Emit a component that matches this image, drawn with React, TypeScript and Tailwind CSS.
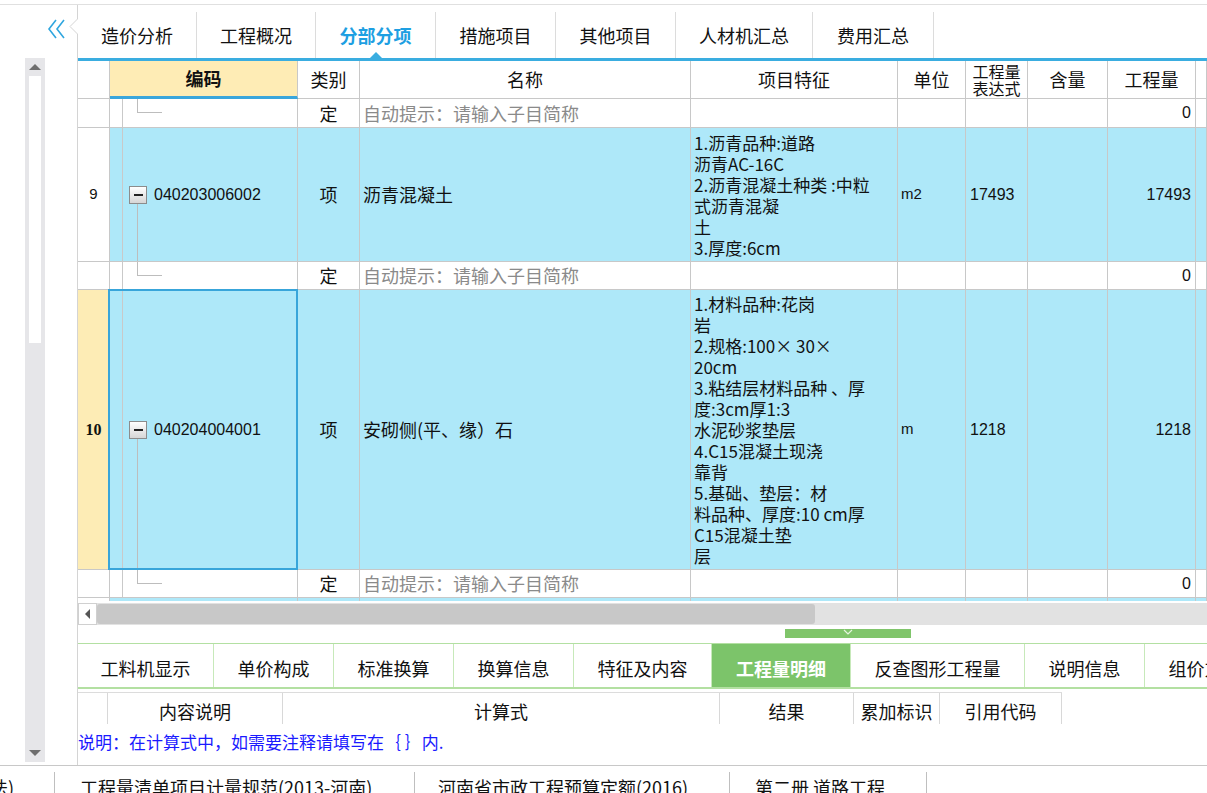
import React from 'react';

const GRID = 'grid grid-cols-[32px_188px_62px_331px_207px_68px_62px_80px_88px_11px]';
const LINE = 'border-r border-[#c8c8c8]';
const BLUE = 'bg-[#aee8f9]';

const topTabs = [
  { label: '造价分析', w: 'w-[119px]' },
  { label: '工程概况', w: 'w-[119px]' },
  { label: '分部分项', w: 'w-[120px]', active: true },
  { label: '措施项目', w: 'w-[120px]' },
  { label: '其他项目', w: 'w-[120px]' },
  { label: '人材机汇总', w: 'w-[137px]' },
  { label: '费用汇总', w: 'w-[121px]' },
];

const bottomTabs = [
  { label: '工料机显示', w: 'w-[136px]' },
  { label: '单价构成', w: 'w-[120px]' },
  { label: '标准换算', w: 'w-[120px]' },
  { label: '换算信息', w: 'w-[120px]' },
  { label: '特征及内容', w: 'w-[138px]' },
  { label: '工程量明细', w: 'w-[139px]', active: true },
  { label: '反查图形工程量', w: 'w-[174px]' },
  { label: '说明信息', w: 'w-[120px]' },
  { label: '组价方案', w: 'w-[120px]' },
];

const feat9 = ['1.沥青品种:道路', '沥青AC-16C', '2.沥青混凝土种类 :中粒', '式沥青混凝', '土', '3.厚度:6cm'];
const feat10 = [
  '1.材料品种:花岗',
  '岩',
  '2.规格:100× 30×',
  '20cm',
  '3.粘结层材料品种 、厚',
  '度:3cm厚1:3',
  '水泥砂浆垫层',
  '4.C15混凝土现浇',
  '靠背',
  '5.基础、垫层：材',
  '料品种、厚度:10 cm厚',
  'C15混凝土垫',
  '层',
];

const ExpandBox = () => (
  <span className="absolute left-[19px] top-1/2 -translate-y-1/2 w-[18px] h-[18px] border border-[#8c8c8c] bg-linear-to-b from-white to-[#d6d6d6] flex items-center justify-center">
    <span className="w-[9px] h-[2px] bg-[#222]" />
  </span>
);

const CodeCell: React.FC<{ code?: string; selected?: boolean; bg?: string }> = ({ code, selected, bg = '' }) => (
  <div className={`relative ${LINE} ${bg} flex items-center`}>
    <span className="absolute left-[12px] top-0 bottom-0 w-px bg-[#c9c9c9]" />
    {code ? (
      <>
        <ExpandBox />
        <span className="absolute left-[27px] top-[calc(50%+9px)] bottom-0 w-px bg-[#bdbdbd]" />
        <span className="pl-[44px] font-['Liberation_Sans',sans-serif] text-[16px] text-[#111]">{code}</span>
      </>
    ) : (
      <>
        <span className="absolute left-[27px] top-0 h-[13px] w-px bg-[#bdbdbd]" />
        <span className="absolute left-[27px] top-[13px] w-[25px] h-px bg-[#bdbdbd]" />
      </>
    )}
    {selected && <span className="absolute left-[-2px] top-[-1px] right-[-1px] bottom-[-1px] border-2 border-[#38a5da] z-10" />}
  </div>
);

const ChildRow: React.FC<{ h: string }> = ({ h }) => (
  <div className={`${GRID} ${h} border-b border-[#c8c8c8] bg-white`}>
    <div className={LINE} />
    <CodeCell />
    <div className={`${LINE} flex items-center justify-center`}>定</div>
    <div className={`${LINE} flex items-center pl-[3px] text-[#8a8a8a] whitespace-nowrap`}>自动提示：请输入子目简称</div>
    <div className={LINE} />
    <div className={LINE} />
    <div className={LINE} />
    <div className={LINE} />
    <div className={`${LINE} flex items-center justify-end pr-[4px] font-['Liberation_Sans',sans-serif] text-[16px]`}>0</div>
    <div className={LINE} />
  </div>
);

const ParentRow: React.FC<{
  h: string;
  no: string;
  code: string;
  name: string;
  feats: string[];
  unit: string;
  qty: string;
  selected?: boolean;
}> = ({ h, no, code, name, feats, unit, qty, selected }) => (
  <div className={`${GRID} ${h} border-b border-[#c8c8c8]`}>
    {selected ? (
      <div className={`${LINE} bg-[#fdecb5] flex items-center justify-center font-['Liberation_Serif',serif] font-bold text-[16px]`}>{no}</div>
    ) : (
      <div className={`${LINE} bg-white flex items-center justify-center font-['Liberation_Sans',sans-serif] text-[15px]`}>{no}</div>
    )}
    <CodeCell code={code} selected={selected} bg={BLUE} />
    <div className={`${LINE} ${BLUE} flex items-center justify-center`}>项</div>
    <div className={`${LINE} ${BLUE} flex items-center pl-[3px] whitespace-nowrap`}>{name}</div>
    <div className={`${LINE} ${BLUE} flex items-center pl-[3px] overflow-hidden`}>
      <div className="flex flex-col text-[17px] leading-[21px] whitespace-nowrap">
        {feats.map((l, i) => (
          <div key={i} className="h-[21px]">{l}</div>
        ))}
      </div>
    </div>
    <div className={`${LINE} ${BLUE} flex items-center pl-[3px] font-['Liberation_Sans',sans-serif] text-[15px]`}>{unit}</div>
    <div className={`${LINE} ${BLUE} flex items-center pl-[4px] font-['Liberation_Sans',sans-serif] text-[16px]`}>{qty}</div>
    <div className={`${LINE} ${BLUE}`} />
    <div className={`${LINE} ${BLUE} flex items-center justify-end pr-[4px] font-['Liberation_Sans',sans-serif] text-[16px]`}>{qty}</div>
    <div className={`${LINE} ${BLUE}`} />
  </div>
);

const HeaderCell: React.FC<{ children?: React.ReactNode }> = ({ children }) => (
  <div className={`${LINE} border-b flex items-center justify-center`}>{children}</div>
);

export default function App() {
  return (
    <div className="w-[1207px] h-[793px] overflow-hidden bg-white flex flex-col font-['Noto_Sans_CJK_SC',sans-serif] text-[18px] text-[#111]">
      <div className="h-[5px] border-b border-[#e0e0e0] shrink-0" />

      <div className="flex h-[760px] shrink-0">
        {/* Left collapsed panel */}
        <div className="relative w-[78px] shrink-0 border-r border-[#d4d4d4] flex flex-col">
          <div className="pl-[47px] pt-[13px] h-[35px]">
            <svg width="19" height="22" viewBox="0 0 19 22" fill="none" stroke="#2fa6df" strokeWidth="1.6">
              <polyline points="9,2 2,11 9,20" />
              <polyline points="17,2 10,11 17,20" />
            </svg>
          </div>
          <svg className="absolute right-[-1px] top-[14px]" width="9" height="15" viewBox="0 0 9 15">
            <rect x="8" y="0" width="1" height="15" fill="white" />
            <polyline points="8.5,0 1,7.5 8.5,15" fill="white" stroke="#d4d4d4" strokeWidth="1" />
          </svg>
          <div className="mt-[18px] mb-[3px] ml-[25px] w-[20px] flex-1 bg-[#e6e6e9] flex flex-col">
            <div className="h-[18px] flex items-center justify-center">
              <span className="w-0 h-0 border-x-[6px] border-x-transparent border-b-[6px] border-b-[#6e6e6e]" />
            </div>
            <div className="mx-[4px] h-[267px] bg-white" />
            <div className="flex-1" />
            <div className="h-[18px] flex items-center justify-center">
              <span className="w-0 h-0 border-x-[6px] border-x-transparent border-t-[6px] border-t-[#6e6e6e]" />
            </div>
          </div>
        </div>

        {/* Main area */}
        <div className="flex-1 flex flex-col min-w-0">
          {/* Top tabs */}
          <div className="flex items-end h-[56px] shrink-0 border-b-[3px] border-[#3aade0]">
            {topTabs.map((t) => (
              <div
                key={t.label}
                className={`relative ${t.w} h-[46px] border-r border-[#dcdcdc] flex items-center justify-center ${
                  t.active ? 'text-[#1e9fe2] font-bold' : ''
                }`}
              >
                {t.label}
                {t.active && (
                  <span className="absolute bottom-0 left-1/2 -translate-x-1/2 w-0 h-0 border-x-[6px] border-x-transparent border-b-[6px] border-b-[#3aade0]" />
                )}
              </div>
            ))}
          </div>

          {/* Table */}
          <div className="h-[540px] shrink-0 overflow-hidden">
            <div className={`${GRID} h-[38px]`}>
              <HeaderCell />
              <div className={`${LINE} bg-[#feecb5] border-b-[3px] border-b-[#3aa6dc] flex items-center justify-center font-bold`}>编码</div>
              <HeaderCell>类别</HeaderCell>
              <HeaderCell>名称</HeaderCell>
              <HeaderCell>项目特征</HeaderCell>
              <HeaderCell>单位</HeaderCell>
              <div className={`${LINE} border-b flex flex-col items-center justify-center text-[16px] leading-[17px]`}>
                <span className="h-[17px]">工程量</span>
                <span className="h-[17px]">表达式</span>
              </div>
              <HeaderCell>含量</HeaderCell>
              <HeaderCell>工程量</HeaderCell>
              <HeaderCell />
            </div>
            <ChildRow h="h-[29px]" />
            <ParentRow h="h-[134px]" no="9" code="040203006002" name="沥青混凝土" feats={feat9} unit="m2" qty="17493" />
            <ChildRow h="h-[28px]" />
            <ParentRow h="h-[280px]" no="10" code="040204004001" name="安砌侧(平、缘）石" feats={feat10} unit="m" qty="1218" selected />
            <ChildRow h="h-[28px]" />
            <div className={`${GRID} h-[3px]`}>
              <div className={`${LINE} bg-white`} />
              <div className={`${LINE} ${BLUE}`} />
              <div className={`${LINE} ${BLUE}`} />
              <div className={`${LINE} ${BLUE}`} />
              <div className={`${LINE} ${BLUE}`} />
              <div className={`${LINE} ${BLUE}`} />
              <div className={`${LINE} ${BLUE}`} />
              <div className={`${LINE} ${BLUE}`} />
              <div className={`${LINE} ${BLUE}`} />
              <div className={`${LINE} ${BLUE}`} />
            </div>
          </div>

          {/* Horizontal scrollbar */}
          <div className="mt-[2px] h-[22px] shrink-0 flex">
            <div className="w-[19px] bg-white border border-[#d0d0d0] flex items-center justify-center">
              <span className="w-0 h-0 border-y-[5px] border-y-transparent border-r-[5px] border-r-[#555]" />
            </div>
            <div className="flex-1 bg-[#e2e2e2] py-[1px]">
              <div className="w-[718px] h-full bg-[#c8c8c8] rounded-[3px]" />
            </div>
          </div>

          {/* Splitter handle */}
          <div className="h-[18px] shrink-0 pt-[4px]">
            <div className="ml-[707px] w-[126px] h-[9px] bg-[#80c56b] flex justify-center">
              <svg width="10" height="6" viewBox="0 0 10 6" fill="none" stroke="#e6f5df" strokeWidth="1.2">
                <polyline points="1,1 5,5 9,1" />
              </svg>
            </div>
          </div>

          {/* Bottom tabs */}
          <div className="h-[46px] shrink-0 flex border-t border-[#b3e0a2] border-b-2 border-b-[#b3e0a2] overflow-hidden">
            {bottomTabs.map((t) => (
              <div
                key={t.label}
                className={`${t.w} shrink-0 border-r border-[#c7e9ba] flex items-center justify-center pt-[5px] ${
                  t.active ? 'bg-[#7cc46a] text-white font-bold' : ''
                }`}
              >
                {t.label}
              </div>
            ))}
          </div>

          {/* Detail header */}
          <div className="mt-[3px] h-[32px] shrink-0 flex w-[984px] border-t border-[#dcdcdc]">
            <div className="w-[30px] border-r border-[#d8d8d8]" />
            <div className="w-[175px] border-r border-[#d8d8d8] flex items-center justify-center pt-[6px]">内容说明</div>
            <div className="w-[437px] border-r border-[#d8d8d8] flex items-center justify-center pt-[6px]">计算式</div>
            <div className="w-[134px] border-r border-[#d8d8d8] flex items-center justify-center pt-[6px]">结果</div>
            <div className="w-[86px] border-r border-[#d8d8d8] flex items-center justify-center pt-[6px]">累加标识</div>
            <div className="w-[122px] border-r border-[#d8d8d8] flex items-center justify-center pt-[6px]">引用代码</div>
          </div>

          <div className="flex-1 pt-[7px] text-[17px] leading-[22px] text-[#1a1aff] whitespace-nowrap">
            说明：在计算式中，如需要注释请填写在｛ ｝内.
          </div>
        </div>
      </div>

      {/* Status bar */}
      <div className="flex-1 border-t border-[#c8c8c8] flex items-end overflow-hidden">
        <div className="w-[55px] h-[21px] border-r border-[#bfbfbf] overflow-hidden">
          <span className="block ml-[-10px] pt-[3px] leading-[24px] whitespace-nowrap">法)</span>
        </div>
        <div className="w-[360px] h-[21px] border-r border-[#bfbfbf] pl-[25px] pt-[3px] leading-[24px] whitespace-nowrap">
          工程量清单项目计量规范(2013-河南)
        </div>
        <div className="w-[315px] h-[21px] border-r border-[#bfbfbf] pl-[23px] pt-[3px] leading-[24px] whitespace-nowrap">
          河南省市政工程预算定额(2016)
        </div>
        <div className="w-[197px] h-[21px] border-r border-[#bfbfbf] pl-[25px] pt-[3px] leading-[24px] whitespace-nowrap">
          第二册 道路工程
        </div>
      </div>
    </div>
  );
}
